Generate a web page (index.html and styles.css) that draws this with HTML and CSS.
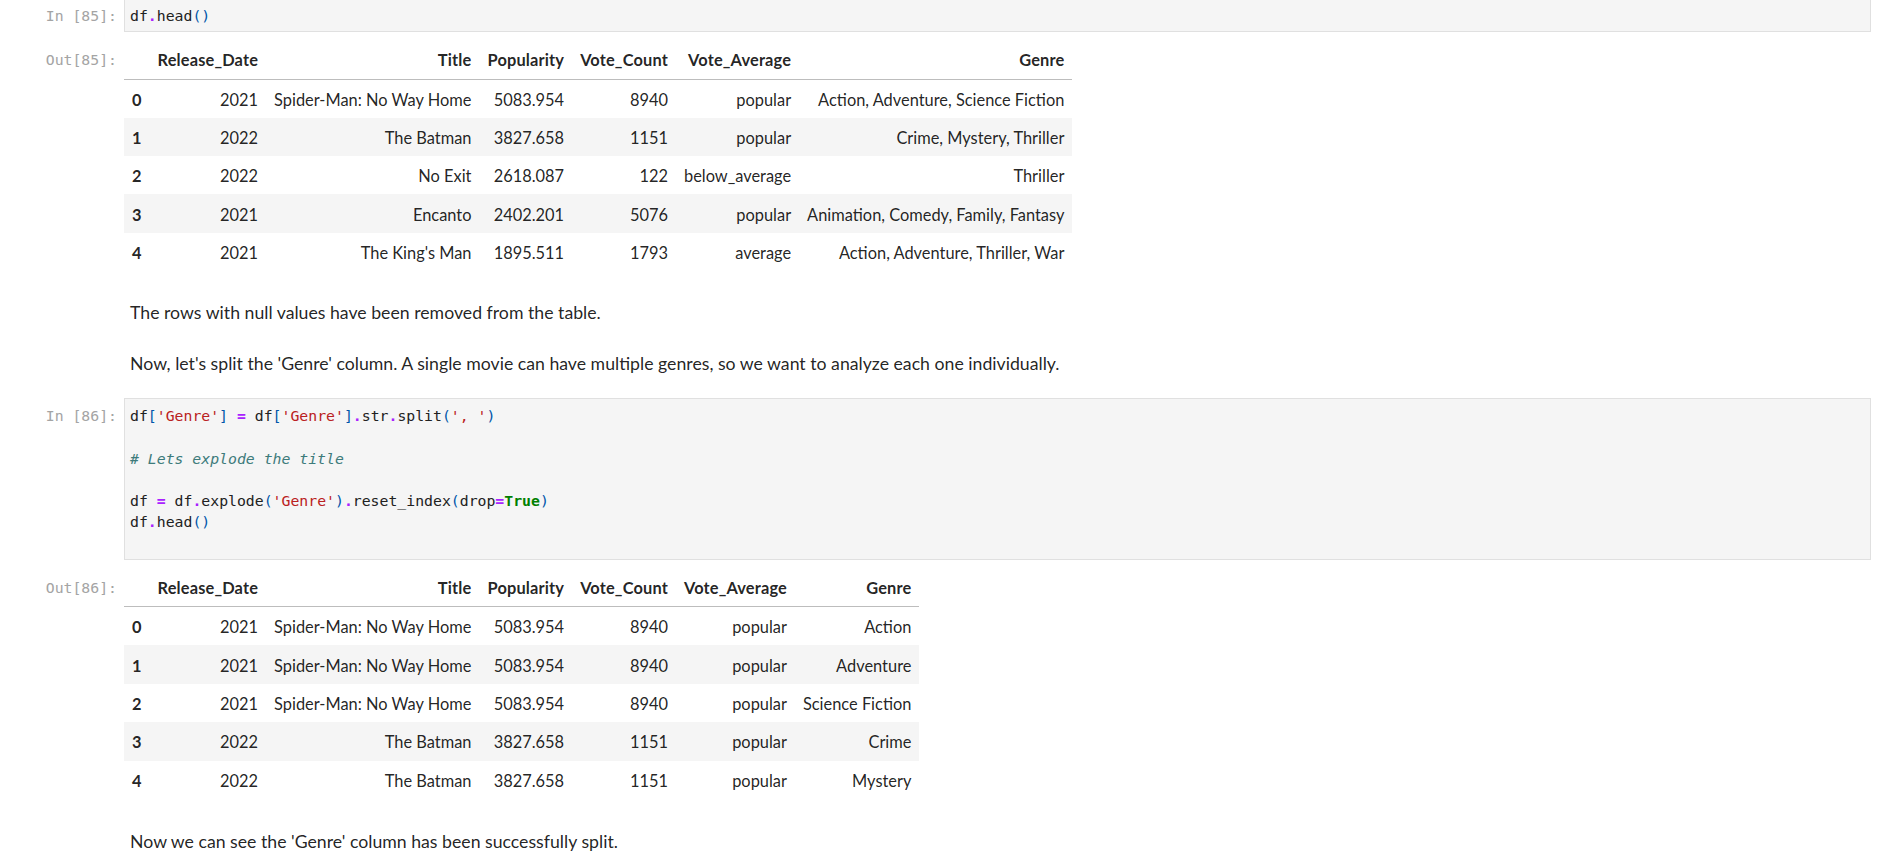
FILE: index.html
```html
<!DOCTYPE html>
<html lang="en">
<head>
<meta charset="utf-8">
<title>Notebook</title>
<link rel="stylesheet" href="styles.css">
</head>
<body>
<div class="notebook">

  <div class="cell code-cell first">
    <div class="prompt in-prompt">In [85]:</div>
    <div class="input"><pre class="code">df<span class="o">.</span>head<span class="p">()</span></pre></div>
  </div>

  <div class="cell output-cell">
    <div class="prompt out-prompt">Out[85]:</div>
    <div class="output">
      <table class="df">
        <thead>
          <tr><th></th><th>Release_Date</th><th>Title</th><th>Popularity</th><th>Vote_Count</th><th>Vote_Average</th><th>Genre</th></tr>
        </thead>
        <tbody>
          <tr><th>0</th><td>2021</td><td>Spider-Man: No Way Home</td><td>5083.954</td><td>8940</td><td>popular</td><td>Action, Adventure, Science Fiction</td></tr>
          <tr><th>1</th><td>2022</td><td>The Batman</td><td>3827.658</td><td>1151</td><td>popular</td><td>Crime, Mystery, Thriller</td></tr>
          <tr><th>2</th><td>2022</td><td>No Exit</td><td>2618.087</td><td>122</td><td>below_average</td><td>Thriller</td></tr>
          <tr><th>3</th><td>2021</td><td>Encanto</td><td>2402.201</td><td>5076</td><td>popular</td><td>Animation, Comedy, Family, Fantasy</td></tr>
          <tr><th>4</th><td>2021</td><td>The King's Man</td><td>1895.511</td><td>1793</td><td>average</td><td>Action, Adventure, Thriller, War</td></tr>
        </tbody>
      </table>
    </div>
  </div>

  <div class="cell md-cell after-output">
    <div class="prompt"></div>
    <div class="md-body"><p>The rows with null values have been removed from the table.</p></div>
  </div>

  <div class="cell md-cell after-md">
    <div class="prompt"></div>
    <div class="md-body"><p>Now, let's split the 'Genre' column. A single movie can have multiple genres, so we want to analyze each one individually.</p></div>
  </div>

  <div class="cell code-cell after-md-code">
    <div class="prompt in-prompt">In [86]:</div>
    <div class="input"><pre class="code">df<span class="p">[</span><span class="s">'Genre'</span><span class="p">]</span> <span class="o">=</span> df<span class="p">[</span><span class="s">'Genre'</span><span class="p">]</span><span class="o">.</span>str<span class="o">.</span>split<span class="p">(</span><span class="s">', '</span><span class="p">)</span>

<span class="c"># Lets explode the title</span>

df <span class="o">=</span> df<span class="o">.</span>explode<span class="p">(</span><span class="s">'Genre'</span><span class="p">)</span><span class="o">.</span>reset_index<span class="p">(</span>drop<span class="o">=</span><span class="k">True</span><span class="p">)</span>
df<span class="o">.</span>head<span class="p">()</span>

</pre></div>
  </div>

  <div class="cell output-cell">
    <div class="prompt out-prompt">Out[86]:</div>
    <div class="output">
      <table class="df">
        <thead>
          <tr><th></th><th>Release_Date</th><th>Title</th><th>Popularity</th><th>Vote_Count</th><th>Vote_Average</th><th>Genre</th></tr>
        </thead>
        <tbody>
          <tr><th>0</th><td>2021</td><td>Spider-Man: No Way Home</td><td>5083.954</td><td>8940</td><td>popular</td><td>Action</td></tr>
          <tr><th>1</th><td>2021</td><td>Spider-Man: No Way Home</td><td>5083.954</td><td>8940</td><td>popular</td><td>Adventure</td></tr>
          <tr><th>2</th><td>2021</td><td>Spider-Man: No Way Home</td><td>5083.954</td><td>8940</td><td>popular</td><td>Science Fiction</td></tr>
          <tr><th>3</th><td>2022</td><td>The Batman</td><td>3827.658</td><td>1151</td><td>popular</td><td>Crime</td></tr>
          <tr><th>4</th><td>2022</td><td>The Batman</td><td>3827.658</td><td>1151</td><td>popular</td><td>Mystery</td></tr>
        </tbody>
      </table>
    </div>
  </div>

  <div class="cell md-cell after-output">
    <div class="prompt"></div>
    <div class="md-body"><p>Now we can see the 'Genre' column has been successfully split.</p></div>
  </div>

</div>
</body>
</html>
```

FILE: styles.css
```css
* { box-sizing: border-box; }
html, body { margin: 0; padding: 0; background: #ffffff; }
body {
  font-family: Lato, "Liberation Sans", sans-serif;
  color: rgba(0, 0, 0, 0.87);
  overflow: hidden;
}
.notebook { padding-right: 13px; margin-top: -2px; }
.cell { display: flex; align-items: flex-start; }
.prompt {
  flex: 0 0 124px;
  padding-right: 7px;
  text-align: right;
  font-family: "DejaVu Sans Mono", monospace;
  font-size: 14.81px;
  line-height: 21.25px;
  color: #a4a4a4;
  white-space: pre;
}
.in-prompt { padding-top: 7px; }
.out-prompt { padding-top: 8px; }
.input {
  flex: 1;
  min-width: 0;
  background: #f5f5f5;
  border: 1px solid #e0e0e0;
  padding: 6px 5px 5px 5px;
}
.code {
  margin: 0;
  font-family: "DejaVu Sans Mono", monospace;
  font-size: 14.81px;
  line-height: 21.25px;
  color: #212121;
  white-space: pre;
}
.code .o { color: #aa22ff; font-weight: bold; }
.code .p { color: #0055aa; }
.code .s { color: #ba2121; }
.code .c { color: #3d7b7b; font-style: italic; }
.code .k { color: #008000; font-weight: bold; }

.output-cell { margin-top: 9px; }
.output { flex: 1; min-width: 0; }
.df {
  border-collapse: collapse;
  border-spacing: 0;
  font-size: 16.4px;
  color: rgba(0, 0, 0, 0.87);
}
.df th, .df td {
  padding: 2px 8px 0 8px;
  height: 38.4px;
  text-align: right;
  white-space: nowrap;
  line-height: 22px;
  font-weight: normal;
  vertical-align: middle;
}
.df th { font-weight: bold; }
.df thead th { height: 38px; padding: 0 8px; border-bottom: 1px solid #bdbdbd; letter-spacing: 0.15px; }
.df tbody tr:nth-child(even) { background: #f5f5f5; }

.md-body { flex: 1; padding-left: 6px; }
.md-body p { margin: 0; padding-top: 0; font-size: 17.7px; line-height: 28px; }
.after-output { margin-top: 28px; }
.after-md { margin-top: 23px; }
.after-md-code { margin-top: 20px; }
.md-cell:last-child p { padding-top: 1px; }
```
